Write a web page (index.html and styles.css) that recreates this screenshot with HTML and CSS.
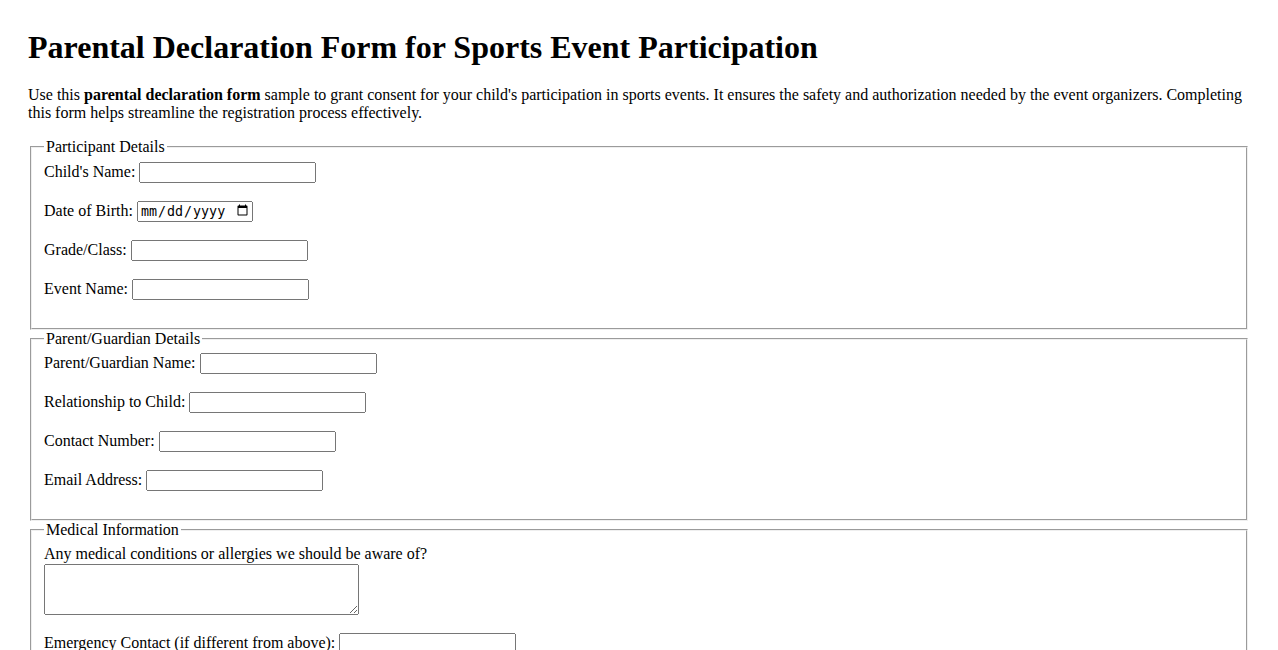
FILE: index.html
```html
<!DOCTYPE html>
<html lang="en">
<head>
<meta charset="utf-8">
<title>Parental Declaration Form for Sports Event Participation</title>
<link rel="stylesheet" href="styles.css">
</head>
<body>
<h1 class="title">Parental Declaration Form for Sports Event Participation</h1>
<p class="intro">Use this <strong>parental declaration form</strong> sample to grant consent for your child's participation in sports events. It ensures the safety and authorization needed by the event organizers. Completing this form helps streamline the registration process effectively.</p>
<form>
<fieldset>
<legend>Participant Details</legend>
<label for="cn">Child's Name:</label> <input class="field" type="text" id="cn"><br><br>
<label for="dob">Date of Birth:</label> <input class="field-date" type="date" id="dob"><br><br>
<label for="gc">Grade/Class:</label> <input class="field" type="text" id="gc"><br><br>
<label for="en">Event Name:</label> <input class="field" type="text" id="en"><br><br>
</fieldset>
<fieldset>
<legend>Parent/Guardian Details</legend>
<label for="pn">Parent/Guardian Name:</label> <input class="field" type="text" id="pn"><br><br>
<label for="rc">Relationship to Child:</label> <input class="field" type="text" id="rc"><br><br>
<label for="ph">Contact Number:</label> <input class="field" type="tel" id="ph"><br><br>
<label for="em">Email Address:</label> <input class="field" type="email" id="em"><br><br>
</fieldset>
<fieldset>
<legend>Medical Information</legend>
<label for="mc">Any medical conditions or allergies we should be aware of?</label><br>
<textarea class="field-area" id="mc" rows="3" cols="40"></textarea><br><br>
<label for="ec">Emergency Contact (if different from above):</label> <input class="field" type="text" id="ec"><br><br>
</fieldset>
</form>
</body>
</html>
```
FILE: styles.css
```css
body {
  margin: 0;
  padding: 8px 28px;
  font-family: "Liberation Serif", "Times New Roman", serif;
  font-size: 16px;
  color: #000;
  background: #fff;
}

.title {
  margin: 21.44px 0 19.5px;
}

.intro {
  margin: 16px 0 16px;
}

.field {
  box-sizing: border-box;
  width: 177px;
  height: 21px;
}

.field-date {
  box-sizing: border-box;
  width: 116px;
  height: 21px;
}

.field-area {
  box-sizing: border-box;
  width: 315px;
  height: 51px;
  vertical-align: top;
  margin-top: 1px;
}
```
